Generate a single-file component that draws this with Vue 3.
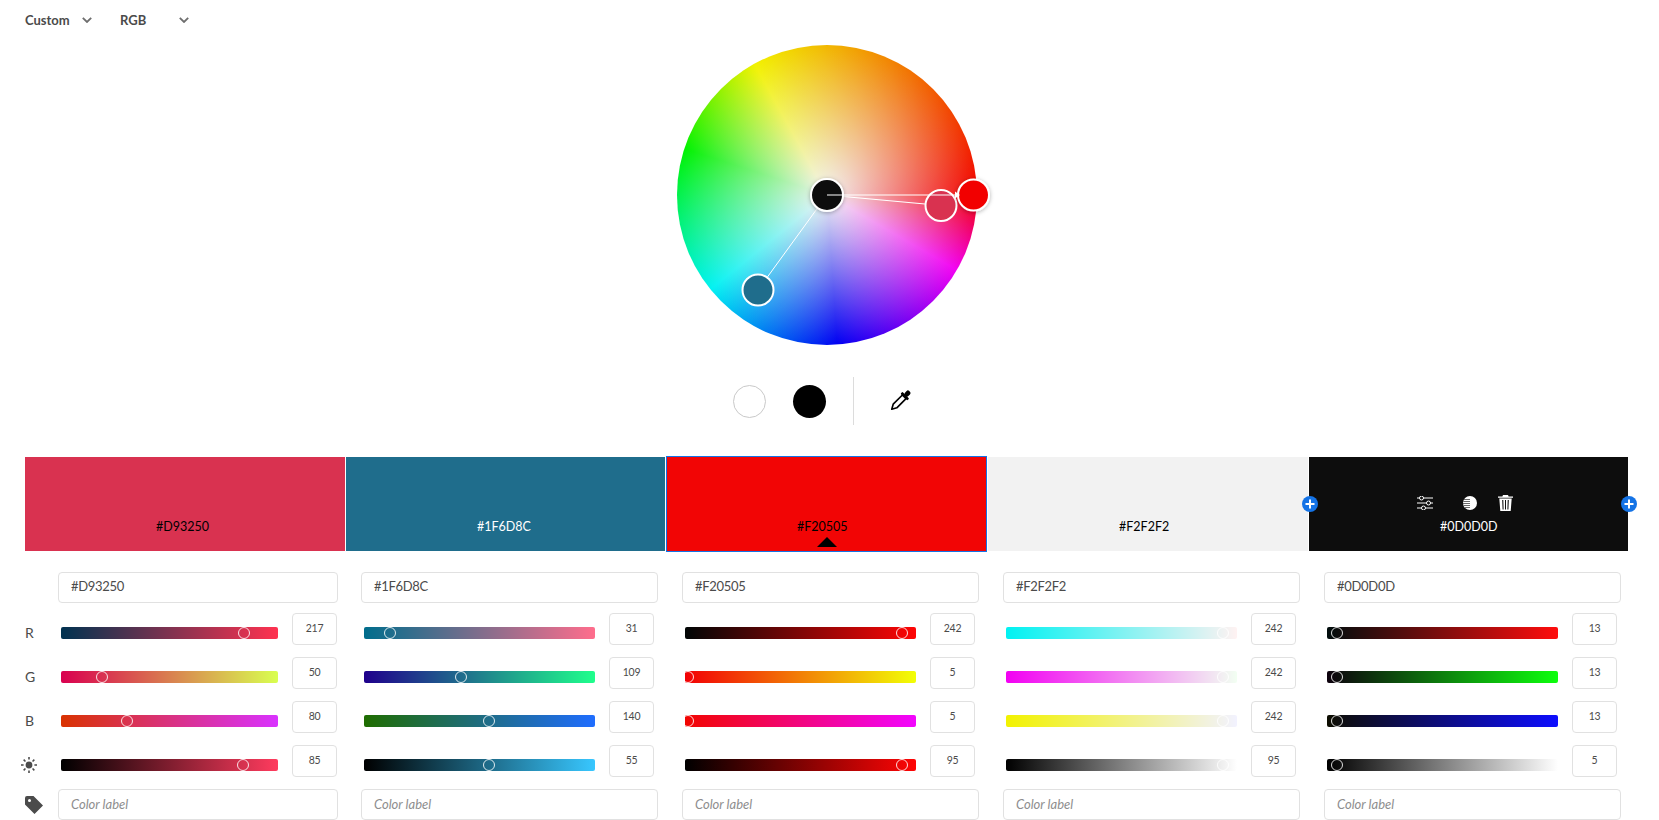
<template>
  <div class="page">
    <div class="top-bar">
      <div class="drop drop-rule">
        <span>Custom</span>
        <svg class="chev" viewBox="0 0 10 6"><path d="M0.8 0.8 5 5 9.2 0.8" /></svg>
      </div>
      <div class="drop drop-mode">
        <span>RGB</span>
        <svg class="chev" viewBox="0 0 10 6"><path d="M0.8 0.8 5 5 9.2 0.8" /></svg>
      </div>
    </div>

    <div class="wheel-wrap">
      <div class="wheel">
        <svg class="wheel-marks" viewBox="0 0 320 300">
          <defs>
            <filter id="handleShadow" x="-40%" y="-40%" width="180%" height="180%">
              <feDropShadow dx="0" dy="1" stdDeviation="2" flood-color="#000" flood-opacity="0.3" />
            </filter>
          </defs>
          <line x1="150" y1="150" x2="248" y2="159" stroke="#fff" stroke-width="1.1" />
          <line x1="150" y1="150" x2="81" y2="245" stroke="#fff" stroke-width="1" />
          <circle cx="81" cy="245" r="15.5" fill="#1F6D8C" stroke="#fff" stroke-width="2" />
          <circle cx="264" cy="160.5" r="15.5" fill="#D93250" stroke="#fff" stroke-width="2" />
          <circle cx="150" cy="150" r="16" fill="#0D0D0D" stroke="#fff" stroke-width="2" filter="url(#handleShadow)" />
          <circle cx="296.500" cy="150" r="15.500" fill="#F20505" stroke="#fff" stroke-width="2" filter="url(#handleShadow)" />
          <line x1="150" y1="150" x2="280" y2="150" stroke="#fff" stroke-width="1.2" />
          <path d="M278 146.500 283 150 278 153.500z" fill="#fff" />
        </svg>
      </div>
    </div>

    <div class="tools">
      <span class="dot dot-white"></span>
      <span class="dot dot-black"></span>
      <span class="tools-line"></span>
      <svg class="dropper" viewBox="0 0 24 24">
        <g transform="rotate(45 12 12)">
          <rect x="9.400" y="-2.800" width="5.200" height="6.500" rx="2" fill="#000" />
          <rect x="6.800" y="3" width="10.400" height="3" rx="1" fill="#000" />
          <path d="M9.200 5.500h5.600v14.200l-2.800 5-2.800-5z" fill="#fff" stroke="#000" stroke-width="1.800" stroke-linejoin="round" />
        </g>
      </svg>
    </div>

    <div class="swatches">
      <div
        v-for="(c, i) in colors"
        :key="c.hex"
        class="swatch"
        :class="{ selected: i === 2 }"
        :style="{ background: c.hex, color: c.text }"
      >
        <div v-if="i === 4" class="swatch-icons">
          <svg class="ic-sliders" viewBox="0 0 16 14" fill="none" stroke="#fff">
            <path d="M0 2h16M0 7h16M0 12h16" stroke-width="1" />
            <circle cx="4.500" cy="2" r="2" fill="#0D0D0D" />
            <circle cx="11.500" cy="7" r="2" fill="#0D0D0D" />
            <circle cx="6.500" cy="12" r="2" fill="#0D0D0D" />
          </svg>
          <svg class="ic-contrast" viewBox="0 0 14 14">
            <circle cx="7" cy="7" r="7" fill="#fff" />
            <path d="M1 3.500h6M.3 5.500H7M0 7.500h7M.3 9.500H7M1 11.500h6" stroke="#6a6a6a" stroke-width="1" />
          </svg>
          <svg class="ic-trash" viewBox="0 0 15 16" fill="#fff">
            <path d="M5 0h5l.6 1.500H15v1.300H0V1.500h4.400zM1.300 3.600h12.400l-1 12.400H2.300zM4.200 5l.4 9.600h1L5.300 5zM7 5v9.600h1V5zM9.700 5l-.3 9.600h1l.4-9.600z" fill-rule="evenodd" />
          </svg>
        </div>
        <span class="swatch-hex">{{ c.hex }}</span>
        <span v-if="i === 2" class="caret"></span>
        <span v-if="i >= 3" class="add">
          <svg viewBox="0 0 16 16"><path d="M8 3.500v9M3.500 8h9" stroke="#fff" stroke-width="2" /></svg>
        </span>
      </div>
    </div>

    <div class="controls">
      <div v-for="(c, i) in colors" :key="c.hex" class="col" :class="{ 'col-first': i === 0 }">
        <div class="field-row">
          <div class="field">{{ c.hex }}</div>
        </div>
        <div v-for="s in slidersFor(c)" :key="s.name" class="slider-row">
          <span v-if="i === 0" class="row-label">
            <svg v-if="s.name === 'V'" class="ic-sun" viewBox="0 0 16 16" fill="#4b4b4b">
              <circle cx="8" cy="8" r="3.400" />
              <path d="M7.200 0h1.600v2.600H7.200zM7.200 13.400h1.600V16H7.200zM0 7.200h2.600v1.600H0zM13.400 7.200H16v1.600h-2.600zM2.100 3.200l1.100-1.100L5 3.900 3.900 5zM11 12.100l1.100-1.100 1.800 1.800-1.100 1.100zM2.100 12.800 3.900 11 5 12.100l-1.800 1.800zM11 3.900l1.800-1.800 1.100 1.100L12.100 5z" />
            </svg>
            <template v-else>{{ s.name }}</template>
          </span>
          <div class="track" :style="{ background: s.gradient }">
            <span class="knob" :style="{ left: s.left }"></span>
          </div>
          <div class="num">{{ s.value }}</div>
        </div>
        <div class="field-row">
          <svg v-if="i === 0" class="ic-tag" viewBox="0 0 18 18" fill="#4b4b4b">
            <path d="M2 0h6.500L18 9.500 9.500 18 0 8.500V2a2 2 0 0 1 2-2zm2.500 3A1.500 1.500 0 1 0 4.500 6 1.500 1.500 0 0 0 4.500 3z" fill-rule="evenodd" />
          </svg>
          <div class="field placeholder">Color label</div>
        </div>
      </div>
    </div>
  </div>
</template>

<script setup>
const base = [
  { hex: '#D93250', text: '#000', bright: 85 },
  { hex: '#1F6D8C', text: '#fff', bright: 55 },
  { hex: '#F20505', text: '#000', bright: 95 },
  { hex: '#F2F2F2', text: '#000', bright: 95 },
  { hex: '#0D0D0D', text: '#fff', bright: 5 },
];

const colors = base.map((c) => {
  const n = parseInt(c.hex.slice(1), 16);
  return { ...c, rgb: [(n >> 16) & 255, (n >> 8) & 255, n & 255] };
});

// knob sits a little left of the exact percentage
const knobLeft = (pct) => `calc(${pct}% - 2px)`;

const slidersFor = (c) => {
  const [r, g, b] = c.rgb;
  const scale = 255 / Math.max(r, g, b);
  const full = c.rgb.map((v) => Math.round(v * scale)).join(',');
  return [
    { name: 'R', value: r, left: knobLeft((r / 255) * 100), gradient: `linear-gradient(90deg, rgb(0,${g},${b}), rgb(255,${g},${b}))` },
    { name: 'G', value: g, left: knobLeft((g / 255) * 100), gradient: `linear-gradient(90deg, rgb(${r},0,${b}), rgb(${r},255,${b}))` },
    { name: 'B', value: b, left: knobLeft((b / 255) * 100), gradient: `linear-gradient(90deg, rgb(${r},${g},0), rgb(${r},${g},255))` },
    { name: 'V', value: c.bright, left: knobLeft(c.bright), gradient: `linear-gradient(90deg, #000, rgb(${full}))` },
  ];
};
</script>

<style>
html,
body {
  margin: 0;
  height: 100%;
  overflow: hidden;
  background: #fff;
}
</style>

<style scoped>
.page {
  box-sizing: border-box;
  width: 1659px;
  height: 820px;
  padding: 0 31px 0 25px;
  overflow: hidden;
  font-family: Lato, "Noto Sans", sans-serif;
  color: #4b4b4b;
}

.top-bar {
  display: flex;
  align-items: center;
  height: 40px;
  margin-bottom: 5px;
  font-size: 13px;
  font-weight: 700;
}

.drop {
  display: flex;
  align-items: center;
  justify-content: space-between;
}

.drop-rule {
  width: 67px;
  margin-right: 28px;
}

.drop-mode {
  width: 69px;
}

.chev {
  width: 10px;
  height: 6px;
  fill: none;
  stroke: #6e6e6e;
  stroke-width: 1.8;
}

.wheel-wrap {
  display: flex;
  justify-content: center;
}

.wheel {
  position: relative;
  width: 300px;
  height: 300px;
  border-radius: 50%;
  background:
    linear-gradient(rgba(0, 0, 0, 0.05), rgba(0, 0, 0, 0.05)),
    radial-gradient(closest-side, #fff 0, rgba(255, 255, 255, 0) 100%),
    conic-gradient(from 90deg, #f00 0deg, #f0f 30deg, #00f 86deg, #0ff 141deg, #0f0 198deg, #ff0 241deg, #f00 360deg);
}

.wheel-marks {
  position: absolute;
  top: 0;
  left: 0;
  width: 320px;
  height: 300px;
}

.tools {
  display: flex;
  align-items: center;
  justify-content: center;
  height: 48px;
  margin-top: 32px;
  padding-right: 9px;
}

.dot {
  width: 33px;
  height: 33px;
  border-radius: 50%;
  box-sizing: border-box;
}

.dot-white {
  background: #fff;
  border: 1px solid #c9c9c9;
  margin-right: 27px;
}

.dot-black {
  background: #000;
}

.tools-line {
  width: 1px;
  height: 48px;
  background: #dcdcdc;
  margin: 0 35px 0 27px;
}

.dropper {
  width: 22px;
  height: 22px;
  overflow: visible;
}

.swatches {
  display: grid;
  grid-template-columns: 320px 319px 321px 320px 319px;
  column-gap: 1px;
  height: 94px;
  margin-top: 32px;
}

.swatch {
  position: relative;
  display: flex;
  flex-direction: column;
  align-items: flex-start;
  justify-content: flex-end;
  padding: 0 0 15px 131px;
  font-size: 12.5px;
  line-height: 18px;
}

.swatch.selected {
  box-shadow: inset 1px 0 #1473e6, inset -1px 0 #1473e6, 0 -1px #1473e6, 0 1px #1473e6;
  z-index: 1;
}

.swatch-icons {
  display: flex;
  align-items: center;
  height: 16px;
  margin-bottom: 7px;
  margin-left: -23px;
}

.ic-sliders {
  width: 16px;
  height: 14px;
  margin-right: 30px;
}

.ic-contrast {
  width: 14px;
  height: 14px;
  margin-right: 21px;
}

.ic-trash {
  width: 15px;
  height: 16px;
}

.caret {
  position: absolute;
  left: 50%;
  bottom: 4px;
  margin-left: -10px;
  border-left: 10px solid transparent;
  border-right: 10px solid transparent;
  border-bottom: 10px solid #000;
}

.add {
  position: absolute;
  top: 39px;
  right: -10px;
  z-index: 2;
  width: 16px;
  height: 16px;
  border-radius: 50%;
  background: #1473e6;
}

.swatch:last-child .add {
  right: -9px;
}

.add svg {
  display: block;
  width: 16px;
  height: 16px;
}

.controls {
  display: flex;
  gap: 24px;
  margin-top: 21px;
}

.col {
  width: 297px;
  flex: none;
  display: flex;
  flex-direction: column;
  gap: 12px;
}

.col-first {
  width: 313px;
  margin-right: -1px;
}

.field-row {
  display: flex;
  align-items: center;
}

.col-first .field-row {
  padding-left: 33px;
}

.field-row:first-child {
  margin-bottom: -2px;
}

.field {
  flex: 1;
  box-sizing: border-box;
  height: 31px;
  padding: 0 12px;
  border: 1px solid #e1e1e1;
  border-radius: 4px;
  font-size: 13px;
  letter-spacing: -0.3px;
  line-height: 27px;
  color: #4b4b4b;
}

.placeholder {
  font-style: italic;
  color: #8e8e8e;
  letter-spacing: 0;
  line-height: 28px;
}

.ic-tag {
  position: absolute;
  left: 25px;
  width: 18px;
  height: 18px;
}

.slider-row {
  display: flex;
  align-items: flex-start;
  height: 32px;
  padding: 0 4px 0 3px;
}

.col-first .slider-row {
  padding-right: 1px;
}

.row-label {
  width: 33px;
  margin-left: -3px;
  margin-right: 3px;
  height: 32px;
  padding-top: 11px;
  box-sizing: border-box;
  font-size: 14px;
  line-height: 18px;
}

.ic-sun {
  display: block;
  width: 16px;
  height: 16px;
  margin-top: 1px;
  margin-left: -4px;
  overflow: visible;
}

.track {
  position: relative;
  flex: 1;
  height: 12px;
  margin-top: 14px;
  border-radius: 2px;
}

.knob {
  position: absolute;
  top: 50%;
  box-sizing: border-box;
  width: 12px;
  height: 12px;
  margin: -6px 0 0 -6px;
  border: 1.5px solid rgba(255, 255, 255, 0.85);
  border-radius: 50%;
}

.num {
  box-sizing: border-box;
  flex: none;
  width: 45px;
  height: 32px;
  margin-left: 14px;
  border: 1px solid #e1e1e1;
  border-radius: 4px;
  font-size: 10.5px;
  letter-spacing: -0.3px;
  line-height: 29px;
  text-align: center;
  color: #4b4b4b;
}
</style>
